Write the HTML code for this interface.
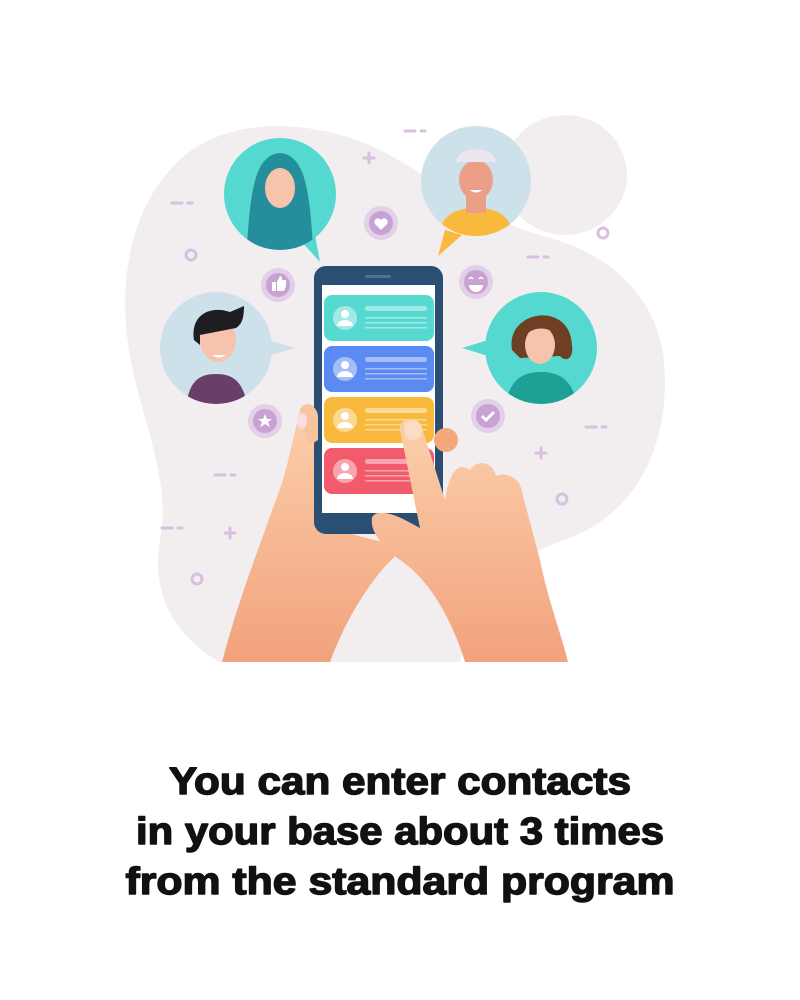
<!DOCTYPE html>
<html><head><meta charset="utf-8"><style>
html,body{margin:0;padding:0;background:#fff;}
svg{display:block}
</style></head><body>
<svg width="800" height="1000" viewBox="0 0 800 1000" xmlns="http://www.w3.org/2000/svg">
<defs>
<linearGradient id="skin" x1="0" y1="0" x2="0" y2="1"><stop offset="0" stop-color="#fbd0ac"/><stop offset="1" stop-color="#f2a27c"/></linearGradient>
</defs>
<rect width="800" height="1000" fill="#fff"/>
<path d="M170 170 C220 110 320 120 380 150 C430 175 470 215 540 235 C600 250 665 290 665 380 C665 470 620 520 565 540 C520 555 480 580 460 662 L220 662 C180 640 150 600 160 540 C170 490 150 440 135 380 C115 300 125 220 170 170 Z" fill="#f2eef0"/>
<ellipse cx="565" cy="175" rx="62" ry="60" fill="#f2eef0"/>
<g stroke="#d9bfe0" stroke-width="3" fill="none" stroke-linecap="round">
<line x1="405" y1="131" x2="415" y2="131"/><line x1="421" y1="131" x2="425" y2="131"/>
<line x1="172" y1="203" x2="182" y2="203"/><line x1="188" y1="203" x2="192" y2="203"/>
<line x1="528" y1="257" x2="538" y2="257"/><line x1="544" y1="257" x2="548" y2="257"/>
<line x1="586" y1="427" x2="596" y2="427"/><line x1="602" y1="427" x2="606" y2="427"/>
<line x1="215" y1="475" x2="225" y2="475"/><line x1="231" y1="475" x2="235" y2="475"/>
<line x1="162" y1="528" x2="172" y2="528"/><line x1="178" y1="528" x2="182" y2="528"/>
<path d="M369 153v10M364 158h10"/><path d="M541 448v10M536 453h10"/><path d="M230 528v10M225 533h10"/>
<circle cx="191" cy="255" r="5"/><circle cx="603" cy="233" r="5"/><circle cx="562" cy="499" r="5"/><circle cx="197" cy="579" r="5"/>
</g>
<g fill="#e3cfe8"><circle cx="381" cy="223" r="17"/><circle cx="278" cy="285" r="17"/><circle cx="476" cy="282" r="17"/><circle cx="265" cy="421" r="17"/><circle cx="488" cy="416" r="17"/></g>
<g fill="#c9a2d4"><circle cx="381" cy="223" r="12"/><circle cx="278" cy="285" r="12"/><circle cx="476" cy="282" r="12"/><circle cx="265" cy="421" r="12"/><circle cx="488" cy="416" r="12"/></g>
<path d="M381 230l-6-6a3.5 3.5 0 0 1 6-4a3.5 3.5 0 0 1 6 4z" fill="#fff"/>
<path d="M272 282h4v9h-4zM277 282l3-6c2 0 2 2 2 4h4v6l-2 5h-7z" fill="#fff"/>
<path d="M265 414l2 5h5l-4 3 2 5-5-3-5 3 2-5-4-3h5z" fill="#fff"/>
<path d="M482 416l4 4 8-8" stroke="#fff" stroke-width="3" fill="none"/>
<path d="M469 285a7 7 0 0 0 14 0z" fill="#fff"/><path d="M469 279q2-3 4 0M479 279q2-3 4 0" stroke="#fff" stroke-width="1.5" fill="none"/>
<path d="M300 240 L320 262 L315 235 Z" fill="#55d8d0"/>
<circle cx="280" cy="194" r="56" fill="#55d8d0"/>
<clipPath id="c1"><circle cx="280" cy="194" r="56"/></clipPath>
<g clip-path="url(#c1)"><path d="M246 260 C250 200 252 155 280 153 C308 155 310 200 314 260Z" fill="#258e9c"/><ellipse cx="280" cy="188" rx="15" ry="20" fill="#f8c3ad"/></g>
<path d="M445 230 L438 256 L462 235 Z" fill="#f8b93c"/>
<circle cx="476" cy="181" r="55" fill="#cde1ea"/>
<clipPath id="c2"><circle cx="476" cy="181" r="55"/></clipPath>
<g clip-path="url(#c2)"><path d="M438 240 C440 215 455 208 476 208 C497 208 512 215 514 240Z" fill="#f8b93c"/><rect x="466" y="195" width="20" height="18" fill="#ea9f86"/><ellipse cx="476" cy="180" rx="17" ry="20" fill="#ea9f86"/><path d="M456 162 C458 145 494 145 496 162Z" fill="#ece6f0"/><path d="M470 190q6 5 12 0z" fill="#fff"/></g>
<path d="M268 340 L295 348 L268 356 Z" fill="#cde1ea"/>
<circle cx="216" cy="348" r="56" fill="#cde1ea"/>
<clipPath id="c3"><circle cx="216" cy="348" r="56"/></clipPath>
<g clip-path="url(#c3)"><path d="M186 410 C188 380 200 374 216 374 C232 374 244 380 248 410Z" fill="#6a3e68"/><ellipse cx="218" cy="340" rx="18" ry="22" fill="#f8c3ad"/><path d="M194 340 C190 315 210 305 230 312 L244 306 C244 322 240 325 236 328 L200 335 L200 345Z" fill="#1e1e22"/><path d="M212 355q7 5 14 0z" fill="#fff"/></g>
<path d="M488 340 L462 348 L488 356 Z" fill="#55d8d0"/>
<circle cx="541" cy="348" r="56" fill="#55d8d0"/>
<clipPath id="c4"><circle cx="541" cy="348" r="56"/></clipPath>
<g clip-path="url(#c4)"><path d="M505 410 C508 380 522 372 541 372 C560 372 574 380 578 410Z" fill="#1fa094"/><path d="M512 350 C505 310 570 300 572 345 C574 360 565 362 560 356 L520 358Z" fill="#6e3f22"/><ellipse cx="540" cy="345" rx="15" ry="19" fill="#f8c3ad"/><path d="M522 340 C530 325 550 325 560 338 L556 322 C540 312 525 318 522 340Z" fill="#6e3f22"/></g>
<path d="M222 662 C238 600 262 540 283 480 C290 455 295 430 300 410 C305 400 318 402 318 420 L322 520 C340 535 380 540 405 548 C375 570 345 620 330 662Z" fill="url(#skin)"/>
<rect x="314" y="266" width="129" height="268" rx="12" fill="#2a4f72"/>
<rect x="322" y="285" width="113" height="228" fill="#fff"/>
<rect x="365" y="275" width="26" height="3" rx="1.5" fill="#4d7194"/>
<g>
<rect x="324" y="295" width="110" height="46" rx="8" fill="#56d9d0"/>
<rect x="324" y="346" width="110" height="46" rx="8" fill="#5a8af2"/>
<rect x="324" y="397" width="110" height="46" rx="8" fill="#f8b93c"/>
<rect x="324" y="448" width="110" height="46" rx="8" fill="#f15b6b"/>
<g fill="#ffffff" opacity="0.45"><circle cx="345" cy="318" r="12"/><circle cx="345" cy="369" r="12"/><circle cx="345" cy="420" r="12"/><circle cx="345" cy="471" r="12"/>
<rect x="365" y="306" width="62" height="5" rx="2.5"/><rect x="365" y="357" width="62" height="5" rx="2.5"/><rect x="365" y="408" width="62" height="5" rx="2.5"/><rect x="365" y="459" width="62" height="5" rx="2.5"/>
<rect x="365" y="317" width="62" height="1.5"/><rect x="365" y="322" width="62" height="1.5"/><rect x="365" y="327" width="62" height="1.5"/>
<rect x="365" y="368" width="62" height="1.5"/><rect x="365" y="373" width="62" height="1.5"/><rect x="365" y="378" width="62" height="1.5"/>
<rect x="365" y="419" width="62" height="1.5"/><rect x="365" y="424" width="62" height="1.5"/><rect x="365" y="429" width="62" height="1.5"/>
<rect x="365" y="470" width="62" height="1.5"/><rect x="365" y="475" width="62" height="1.5"/><rect x="365" y="480" width="62" height="1.5"/></g>
<g fill="#fff"><circle cx="345" cy="314" r="4"/><path d="M337 326a8 6 0 0 1 16 0z"/><circle cx="345" cy="365" r="4"/><path d="M337 377a8 6 0 0 1 16 0z"/><circle cx="345" cy="416" r="4"/><path d="M337 428a8 6 0 0 1 16 0z"/><circle cx="345" cy="467" r="4"/><path d="M337 479a8 6 0 0 1 16 0z"/></g>
</g>
<path d="M300 410 C302 420 304 440 310 445 L318 440 L318 415 C315 402 302 402 300 410Z" fill="#f7c49f"/>
<ellipse cx="302" cy="421" rx="5" ry="8" fill="#f9dde0"/>
<circle cx="446" cy="440" r="12" fill="#f3a87c"/>
<path d="M400 430 C398 418 418 414 422 428 L445 500 C450 470 458 462 470 470 C476 460 492 460 496 476 C504 472 520 476 522 492 L540 560 C548 600 560 630 568 662 L465 662 C452 620 430 580 400 560 C380 545 370 530 372 518 C374 510 390 512 405 520 L420 528 Z" fill="url(#skin)"/>
<ellipse cx="413" cy="430" rx="9" ry="10" fill="#fbdcc4"/>
<g font-family="Liberation Sans, sans-serif" font-weight="bold" font-size="38" fill="#111" stroke="#111" stroke-width="1.4" stroke-linejoin="round" text-anchor="middle">
<text x="400" y="794" textLength="462" lengthAdjust="spacingAndGlyphs">You can enter contacts</text>
<text x="400" y="844" textLength="528" lengthAdjust="spacingAndGlyphs">in your base about 3 times</text>
<text x="400" y="894" textLength="549" lengthAdjust="spacingAndGlyphs">from the standard program</text>
</g>
</svg>
</body></html>
